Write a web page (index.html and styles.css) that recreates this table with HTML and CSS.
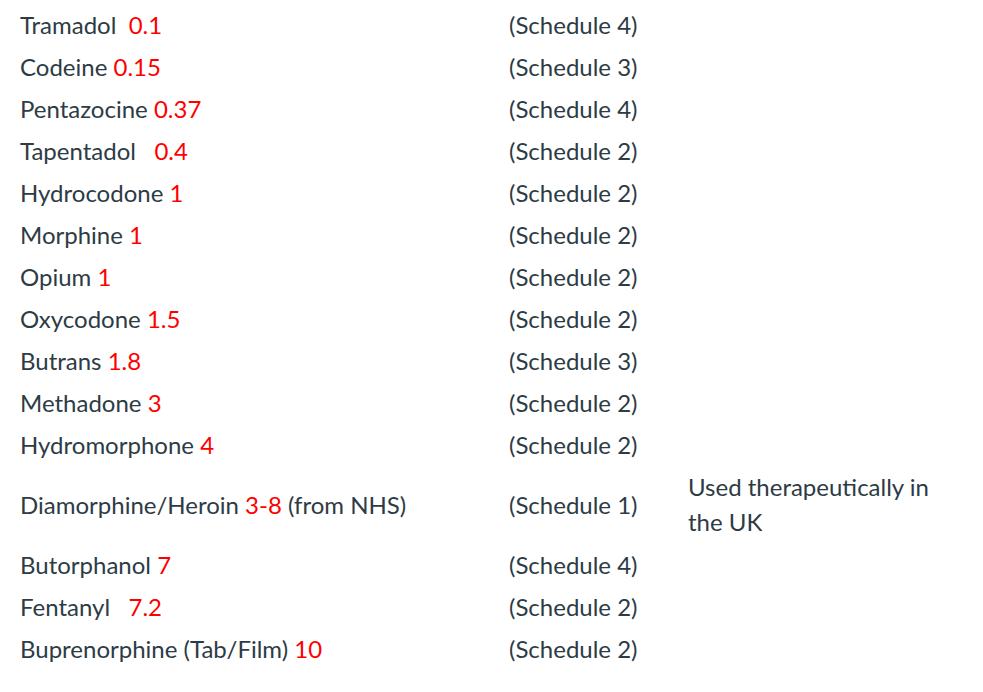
FILE: index.html
```html
<!DOCTYPE html>
<html>
<head>
<meta charset="utf-8">
<link rel="stylesheet" href="styles.css">
</head>
<body>
<table class="drugs">
  <colgroup>
    <col class="c1"><col class="c2"><col class="c3">
  </colgroup>
  <tbody>
    <tr><td>Tramadol&nbsp; <span class="num">0.1</span></td><td>(Schedule 4)</td><td></td></tr>
    <tr><td>Codeine <span class="num">0.15</span></td><td>(Schedule 3)</td><td></td></tr>
    <tr><td>Pentazocine <span class="num">0.37</span></td><td>(Schedule 4)</td><td></td></tr>
    <tr><td>Tapentadol&nbsp;&nbsp; <span class="num">0.4</span></td><td>(Schedule 2)</td><td></td></tr>
    <tr><td>Hydrocodone <span class="num">1</span></td><td>(Schedule 2)</td><td></td></tr>
    <tr><td>Morphine <span class="num">1</span></td><td>(Schedule 2)</td><td></td></tr>
    <tr><td>Opium <span class="num">1</span></td><td>(Schedule 2)</td><td></td></tr>
    <tr><td>Oxycodone <span class="num">1.5</span></td><td>(Schedule 2)</td><td></td></tr>
    <tr><td>Butrans <span class="num">1.8</span></td><td>(Schedule 3)</td><td></td></tr>
    <tr><td>Methadone <span class="num">3</span></td><td>(Schedule 2)</td><td></td></tr>
    <tr><td>Hydromorphone <span class="num">4</span></td><td>(Schedule 2)</td><td></td></tr>
    <tr><td>Diamorphine/Heroin <span class="num">3-8</span> (from NHS)</td><td>(Schedule 1)</td><td class="note">Used therapeutically in the UK</td></tr>
    <tr><td>Butorphanol <span class="num">7</span></td><td>(Schedule 4)</td><td></td></tr>
    <tr><td>Fentanyl&nbsp;&nbsp; <span class="num">7.2</span></td><td>(Schedule 2)</td><td></td></tr>
    <tr><td>Buprenorphine (Tab/Film) <span class="num">10</span></td><td>(Schedule 2)</td><td></td></tr>
  </tbody>
</table>
</body>
</html>
```
FILE: styles.css
```css
html, body {
  margin: 0;
  background: #ffffff;
}
body {
  padding: 3px 0 0 12px;
  font-family: Lato, "Open Sans", sans-serif;
  font-size: 24px;
  color: #2d3b45;
}
.drugs {
  border-collapse: collapse;
  table-layout: fixed;
  width: 947px;
}
.c1 { width: 489px; }
.c2 { width: 179px; }
.c3 { width: 279px; }
.drugs td {
  padding: 3.5px 8px;
  line-height: 35px;
  vertical-align: middle;
}
.drugs td.note {
  padding-top: 4px;
  padding-bottom: 4px;
}
.num {
  color: #ff0000;
}
```
